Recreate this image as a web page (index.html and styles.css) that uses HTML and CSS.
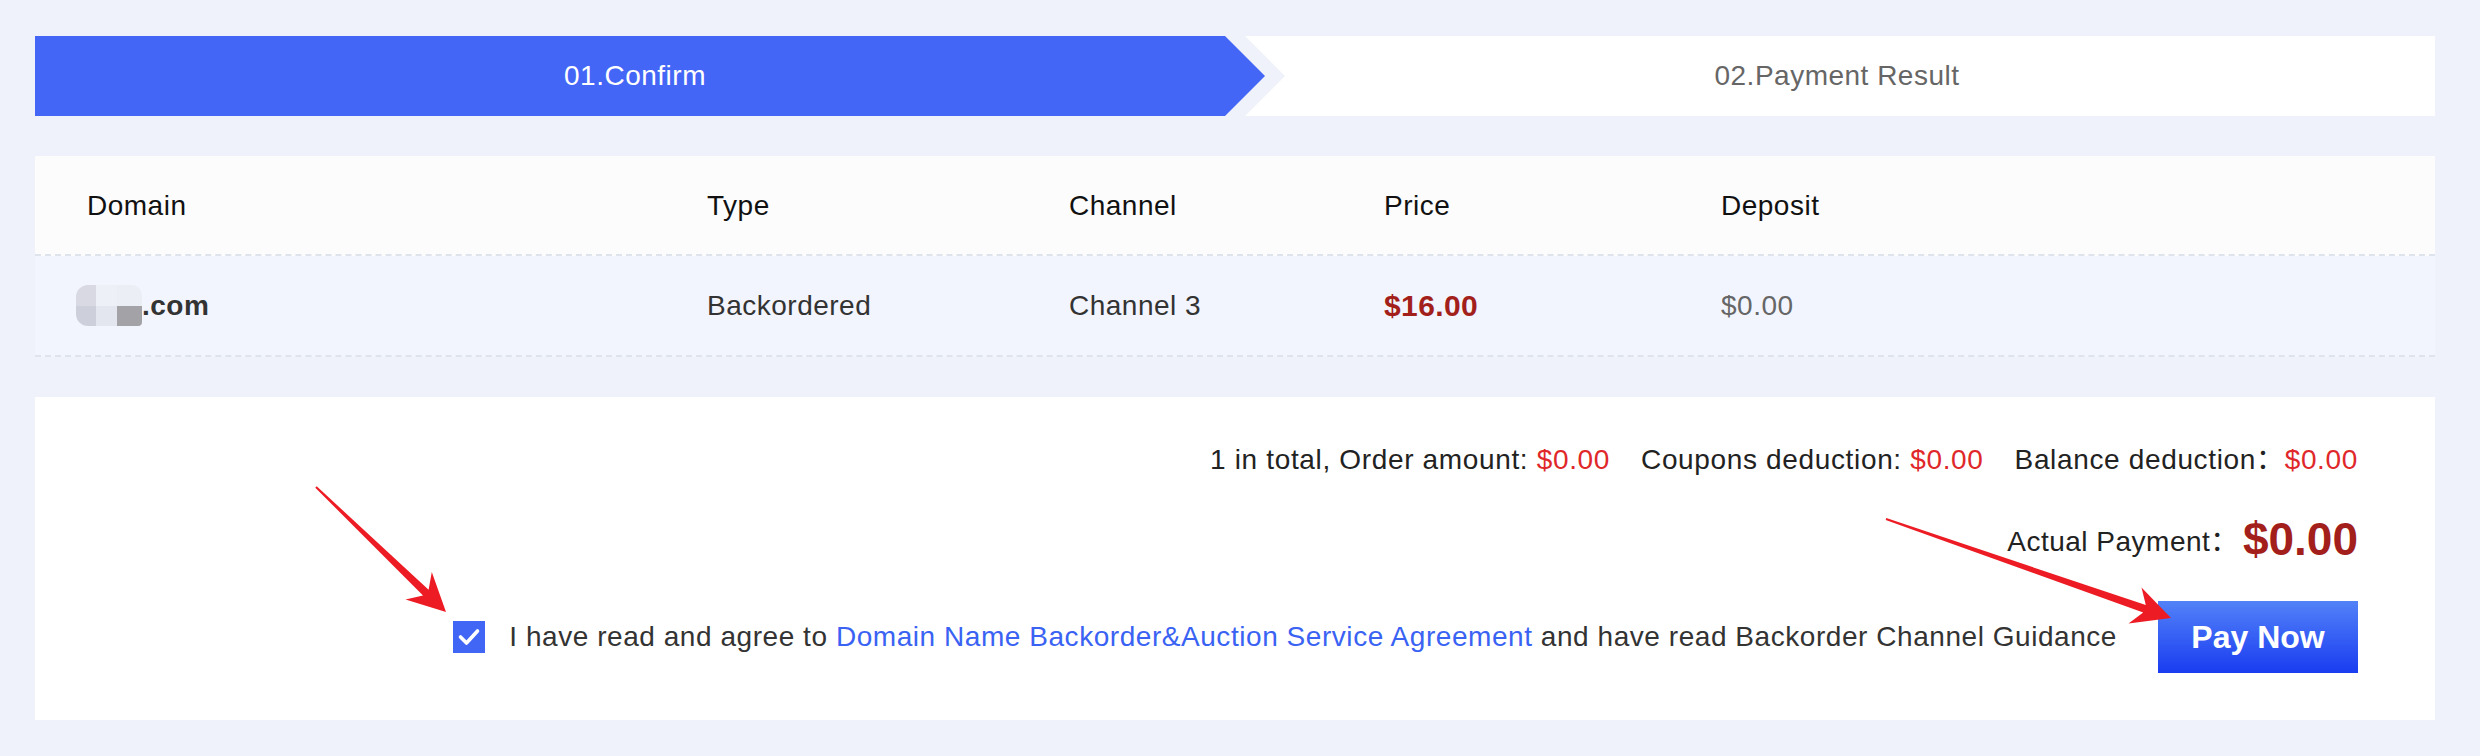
FILE: index.html
```html
<!DOCTYPE html>
<html lang="en">
<head>
<meta charset="utf-8">
<title>Confirm Order</title>
<link rel="stylesheet" href="styles.css">
</head>
<body>
<div class="page">
  <div class="steps">
    <div class="step step-active">01.Confirm</div>
    <div class="step step-next">02.Payment Result</div>
  </div>

  <div class="order-table">
    <div class="tr thead">
      <div class="td">Domain</div>
      <div class="td">Type</div>
      <div class="td">Channel</div>
      <div class="td">Price</div>
      <div class="td">Deposit</div>
    </div>
    <div class="tr tbody">
      <div class="td domain-cell">
        <span class="blur">
          <span class="px px1"></span><span class="px px2"></span><span class="px px3"></span>
          <span class="px px4"></span><span class="px px5"></span><span class="px px6"></span>
        </span><span class="domain">.com</span>
      </div>
      <div class="td">Backordered</div>
      <div class="td">Channel 3</div>
      <div class="td price">$16.00</div>
      <div class="td deposit">$0.00</div>
    </div>
  </div>

  <div class="panel">
    <div class="summary">
      <span>1 in total, Order amount: <span class="red">$0.00</span></span>
      <span class="grp">Coupons deduction: <span class="red">$0.00</span></span>
      <span class="grp">Balance deduction：<span class="red">$0.00</span></span>
    </div>
    <div class="actual">
      <span class="actual-label">Actual Payment：</span>
      <span class="actual-total">$0.00</span>
    </div>
    <div class="agree">
      <span class="checkbox">
        <svg width="32" height="32" viewBox="0 0 32 32"><polyline points="7.5,16 13.5,22 24.5,10" fill="none" stroke="#ffffff" stroke-width="3.6" stroke-linecap="round" stroke-linejoin="round"/></svg>
      </span>
      <span class="agree-text">I have read and agree to <a class="link" href="#">Domain Name Backorder&amp;Auction Service Agreement</a> and have read Backorder Channel Guidance</span>
      <button class="pay">Pay Now</button>
    </div>
  </div>
</div>

<svg class="annotations" width="2480" height="756" viewBox="0 0 2480 756">
  <polygon fill="#ed1c24" points="315.3,487.7 423.0,595.5 405.5,599.5 446,612 431.8,572.0 428.6,589.7 316.7,486.3"/>
  <polygon fill="#ed1c24" points="1885.7,519.9 2143.2,612.6 2128.5,623.5 2171,618 2141.5,587.5 2145.8,605.0 1886.3,518.1"/>
</svg>
</body>
</html>
```

FILE: styles.css
```css
* { box-sizing: border-box; }

html, body {
  margin: 0;
  padding: 0;
}

body {
  background: #eff2fa;
  font-family: "Liberation Sans", "Noto Sans CJK SC", Arial, sans-serif;
  font-size: 28px;
  letter-spacing: 0.5px;
  color: #333333;
  width: 2480px;
  height: 756px;
  overflow: hidden;
  position: relative;
}

.page {
  padding: 36px 45px 0 35px;
}

/* Steps */
.steps {
  display: flex;
  height: 80px;
}

.step {
  height: 80px;
  display: flex;
  align-items: center;
  justify-content: center;
}

.step-active {
  width: 1230px;
  flex: none;
  background: #4366f6;
  color: #ffffff;
  padding-right: 30px;
  clip-path: polygon(0 0, calc(100% - 40px) 0, 100% 50%, calc(100% - 40px) 100%, 0 100%);
}

.step-next {
  flex: 1;
  margin-left: -20px;
  padding-right: 6px;
  background: #ffffff;
  color: #666666;
  clip-path: polygon(0 0, 100% 0, 100% 100%, 0 100%, 40px 50%);
}

/* Table */
.order-table {
  margin-top: 40px;
}

.tr {
  display: grid;
  grid-template-columns: 620px 362px 315px 337px 1fr;
  padding-left: 52px;
  align-items: center;
  border-bottom: 2px dashed #dfe3ec;
}

.thead {
  height: 100px;
  padding-top: 2px;
  background: #fcfcfc;
  color: #111111;
}

.tbody {
  height: 101px;
  background: #f2f5fd;
  color: #333333;
}

.domain-cell {
  display: flex;
  align-items: center;
}

.blur {
  display: grid;
  grid-template-columns: 20px 21px 21px 4px;
  grid-template-rows: 21px 20px;
  margin-left: -11px;
  width: 66px;
  height: 41px;
  border-radius: 12px 10px 4px 12px;
  overflow: hidden;
}

.px1 { background: #d8d9e2; }
.px2 { background: #eef0f8; }
.px3 { background: #eceef6; grid-column: span 2; }
.px4 { background: #cdd0da; }
.px5 { background: #e4e6ef; }
.px6 { background: #a2a2a7; grid-column: span 2; }

.domain {
  font-weight: 700;
  color: #333333;
}

.price {
  font-size: 30px;
  font-weight: 700;
  letter-spacing: 0.4px;
  color: #a31f1b;
}

.deposit {
  color: #666666;
}

/* Panel */
.panel {
  margin-top: 40px;
  background: #ffffff;
  padding: 43px 77px 47px 0;
  display: flex;
  flex-direction: column;
  align-items: flex-end;
  color: #222222;
}

.summary {
  height: 40px;
  line-height: 40px;
  display: flex;
  letter-spacing: 0.65px;
}

.grp {
  margin-left: 31px;
}

.red {
  color: #e0282a;
}

.actual {
  margin-top: 31px;
  height: 56px;
  display: flex;
  align-items: center;
}

.actual-label {
  margin-right: 4px;
}

.actual-total {
  font-size: 46px;
  font-weight: 700;
  color: #a31f1b;
  letter-spacing: 0;
}

.agree {
  margin-top: 34px;
  display: flex;
  align-items: center;
}

.checkbox {
  width: 32px;
  height: 32px;
  background: #4166f5;
  display: flex;
  margin-right: 24px;
}

.agree-text {
  color: #333333;
  letter-spacing: 0.55px;
}

.link {
  color: #3a62f3;
  text-decoration: none;
}

.pay {
  margin-left: 41px;
  width: 200px;
  height: 72px;
  border: none;
  background: linear-gradient(180deg, #5282f8 0%, #1a3cf0 100%);
  color: #ffffff;
  font-family: "Liberation Sans", Arial, sans-serif;
  font-size: 32px;
  font-weight: 700;
  letter-spacing: 0;
  padding: 0;
}

/* Annotation arrows overlay */
.annotations {
  position: absolute;
  top: 0;
  left: 0;
  pointer-events: none;
}
```
